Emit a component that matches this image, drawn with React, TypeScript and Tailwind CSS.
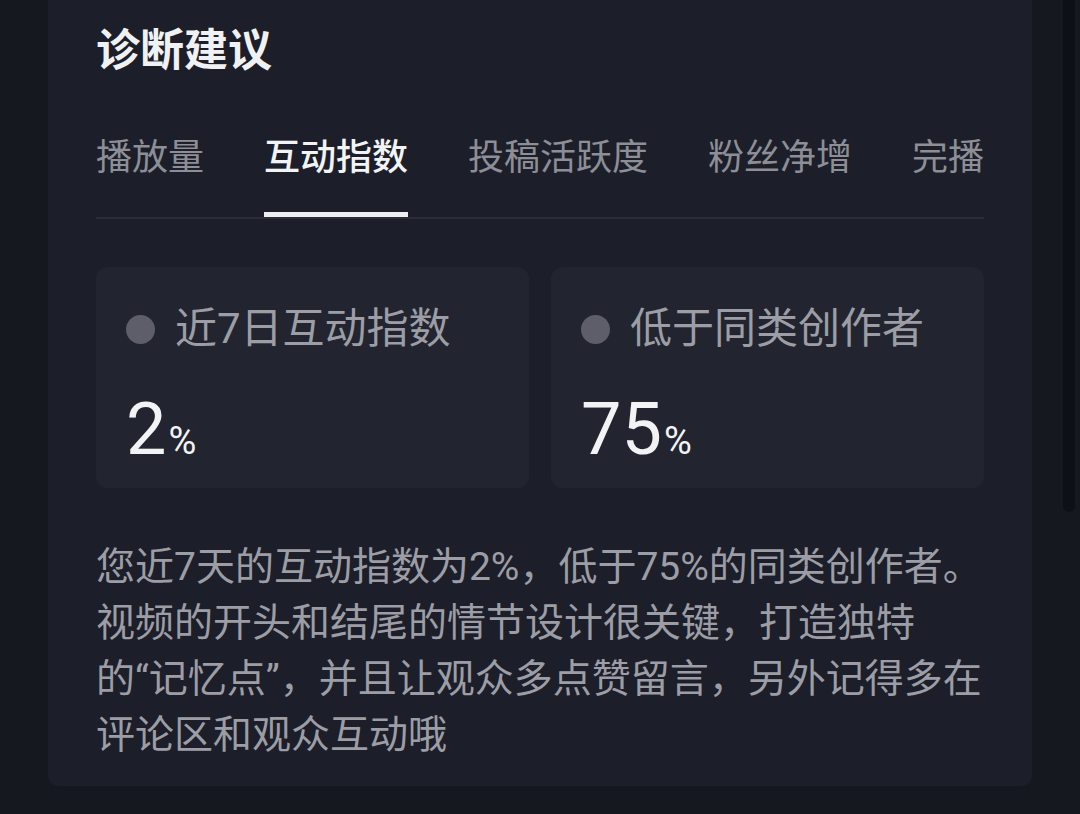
import React from "react";

const FONT = { fontFamily: 'Roboto, "Noto Sans CJK SC", sans-serif' };

export default function App() {
  const tabs = ["播放量", "互动指数", "投稿活跃度", "粉丝净增", "完播"];
  return (
    <div className="relative w-[1080px] h-[814px] overflow-hidden bg-[#161820] flex" style={FONT}>
      <div className="ml-[48px] w-[984px] h-[786px] bg-[#1c1f29] rounded-b-[10px] px-[48px] pt-[21px] flex flex-col">
        <div className="text-[44px] leading-[60px] font-bold text-[#f0f1f3]">诊断建议</div>

        <div className="mt-[53px] flex gap-[60px] overflow-hidden border-b-2 border-[#2b2e38] h-[85px]">
          {tabs.map((t, i) => (
            <div
              key={t}
              className={
                i === 1
                  ? "relative shrink-0 text-[36px] leading-[48px] font-medium text-[#f2f3f5]"
                  : "relative shrink-0 text-[36px] leading-[48px] text-[#8d8e96]"
              }
            >
              {t}
              {i === 1 && <div className="absolute left-0 right-0 top-[78px] h-[6px] bg-[#eceef1]" />}
            </div>
          ))}
        </div>

        <div className="mt-[48px] grid grid-cols-2 gap-[22px]">
          <StatCard label={<>近7日互动指数</>} value="2" />
          <StatCard label={<>低于同类创作者</>} value="75" />
        </div>

        <div className="mt-[51px] text-[39px] leading-[56px] text-[#9c9da5]">
          <div>您近7天的互动指数为2%，低于75%的同类创作者。</div>
          <div>视频的开头和结尾的情节设计很关键，打造独特</div>
          <div>的“记忆点”，并且让观众多点赞留言，另外记得多在</div>
          <div>评论区和观众互动哦</div>
        </div>
      </div>
      <div className="absolute left-[1063px] top-0 w-[12px] h-[512px] rounded-b-full bg-[#0e1017]" />
    </div>
  );
}

function StatCard({ label, value }: { label: React.ReactNode; value: string }) {
  return (
    <div className="h-[221px] rounded-[12px] bg-[#22252f] pl-[30px] pt-[34px] flex flex-col">
      <div className="flex items-center gap-[20px]">
        <div className="w-[29px] h-[29px] rounded-full bg-[#5d5e69]" />
        <div className="text-[42px] leading-[56px] text-[#9c9da5]">{label}</div>
      </div>
      <div className="mt-[37px] flex items-baseline text-[#f2f3f5]">
        <span className="text-[72px] leading-none" style={{ fontFamily: "Roboto, sans-serif" }}>
          {value}
        </span>
        <span className="ml-[2px] text-[38px] leading-none" style={{ fontFamily: "Roboto, sans-serif" }}>
          %
        </span>
      </div>
    </div>
  );
}
